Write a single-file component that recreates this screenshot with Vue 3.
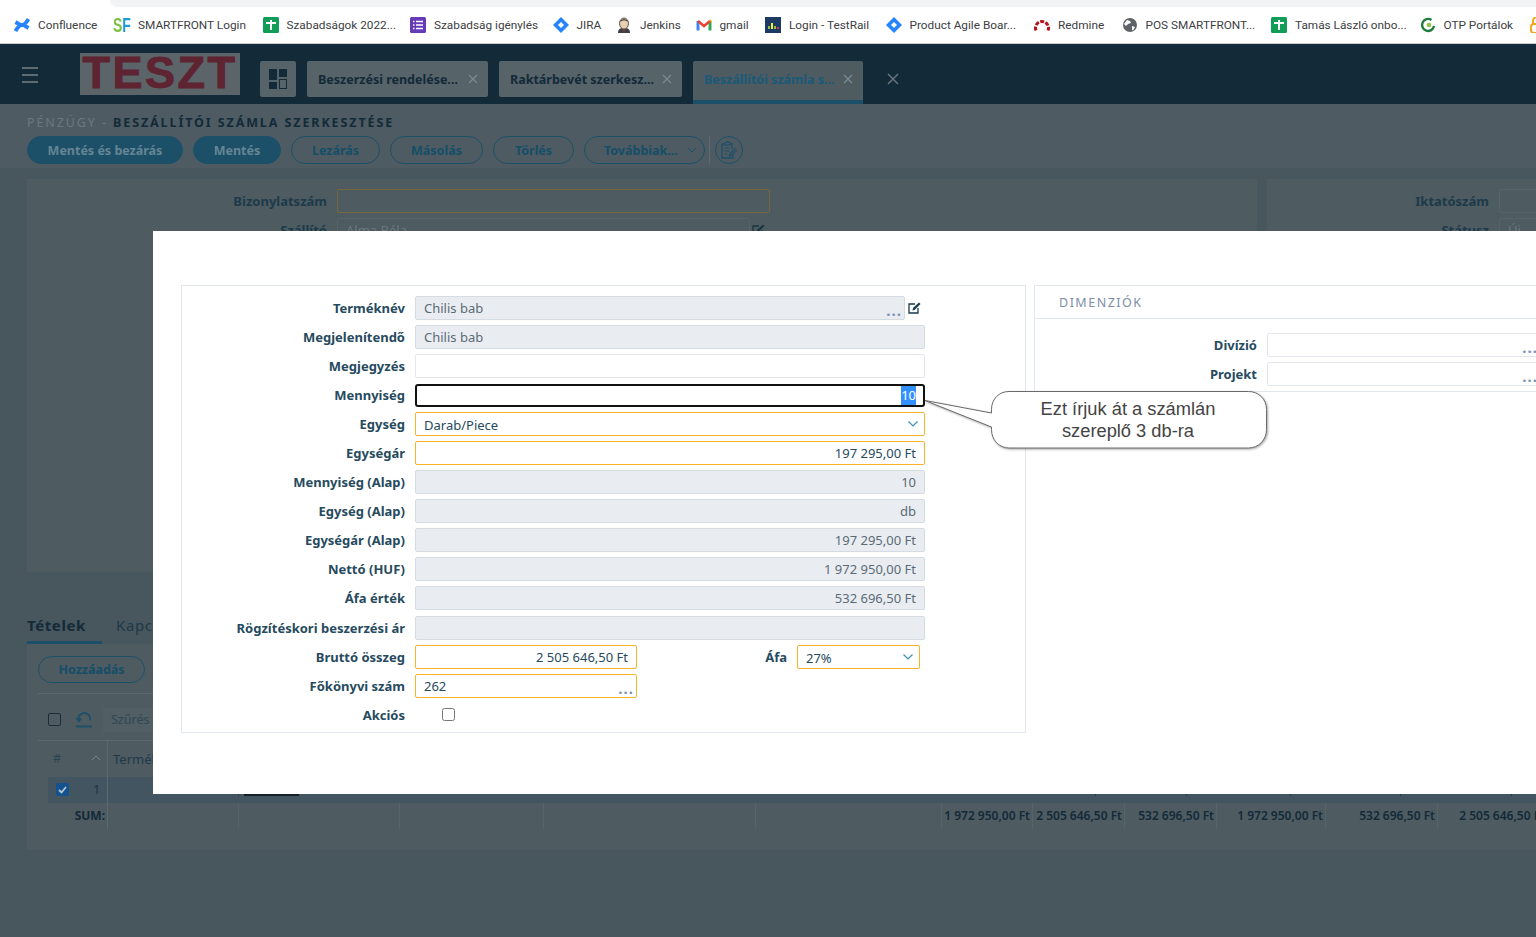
<script setup>
const bookmarks = [
  { icon: 'confluence', label: 'Confluence', width: 58.5 },
  { icon: 'sf', label: 'SMARTFRONT Login', width: 108 },
  { icon: 'sheet', label: 'Szabadságok 2022...', width: 107 },
  { icon: 'forms', label: 'Szabadság igénylés', width: 102 },
  { icon: 'jira', label: 'JIRA', width: 23 },
  { icon: 'jenkins', label: 'Jenkins', width: 39 },
  { icon: 'gmail', label: 'gmail', width: 29 },
  { icon: 'testrail', label: 'Login - TestRail', width: 80 },
  { icon: 'jira', label: 'Product Agile Boar...', width: 108 },
  { icon: 'redmine', label: 'Redmine', width: 47 },
  { icon: 'globe', label: 'POS SMARTFRONT...', width: 109 },
  { icon: 'sheet', label: 'Tamás László onbo...', width: 108 },
  { icon: 'otp', label: 'OTP Portálok', width: 69 },
  { icon: 'last', label: '', width: 0 }
]

const tabs = [
  { label: 'Beszerzési rendelése...', cls: 'tab-a' },
  { label: 'Raktárbevét szerkesz...', cls: 'tab-b' },
  { label: 'Beszállítói számla s...', cls: 'tab-c active' }
]

const disabledRows = [
  { label: 'Mennyiség (Alap)', value: '10' },
  { label: 'Egység (Alap)', value: 'db' },
  { label: 'Egységár (Alap)', value: '197 295,00 Ft' },
  { label: 'Nettó (HUF)', value: '1 972 950,00 Ft' },
  { label: 'Áfa érték', value: '532 696,50 Ft' }
]

const sums = [
  '', '', '', '', '',
  '1 972 950,00 Ft', '2 505 646,50 Ft', '532 696,50 Ft',
  '1 972 950,00 Ft', '532 696,50 Ft', '2 505 646,50 Ft'
]
</script>

<template>
  <div class="screen">
    <div class="omni-wrap"><div class="omni"></div></div>

    <div class="bookmarks">
      <div v-for="(b, i) in bookmarks" :key="i" class="bookmark">
        <svg v-if="b.icon === 'confluence'" class="bm-icon" viewBox="0 0 16 16">
          <path d="M1.500 14C5 8 7.500 7 10.500 8.600L14.500 11" fill="none" stroke="#2684ff" stroke-width="3.800" />
          <path d="M14.500 2C11 8 8.500 9 5.500 7.400L1.500 5" fill="none" stroke="#2684ff" stroke-width="3.800" />
        </svg>
        <span v-else-if="b.icon === 'sf'" class="bm-icon sf"><i class="s">S</i><i class="f">F</i></span>
        <svg v-else-if="b.icon === 'sheet'" class="bm-icon" viewBox="0 0 16 16">
          <rect width="16" height="16" rx="1.500" fill="#0f9d58" />
          <path d="M3 6h10M8 3v10" stroke="#fff" stroke-width="2" />
        </svg>
        <svg v-else-if="b.icon === 'forms'" class="bm-icon" viewBox="0 0 16 16">
          <rect width="16" height="16" rx="1.500" fill="#673ab7" />
          <path d="M6 4.500h7M6 8h7M6 11.500h7M3 4.500h1.500M3 8h1.500M3 11.500h1.500" stroke="#fff" stroke-width="1.500" />
        </svg>
        <svg v-else-if="b.icon === 'jira'" class="bm-icon" viewBox="0 0 16 16">
          <path d="M8 0l8 8-8 8-8-8z" fill="#2684ff" />
          <path d="M8 5l3 3-3 3-3-3z" fill="#fff" />
        </svg>
        <svg v-else-if="b.icon === 'jenkins'" class="bm-icon" viewBox="0 0 16 16">
          <path d="M2 16c0-4 2-5 6-5s6 1 6 5z" fill="#3f3f46" />
          <path d="M6.500 12l1.500 2 1.500-2z" fill="#c9342c" />
          <ellipse cx="8" cy="6.500" rx="4.500" ry="5.500" fill="#eacfb2" stroke="#57504a" />
          <path d="M4 5c1-4 7-4 8 0-3-2-5-2-8 0z" fill="#57504a" />
        </svg>
        <svg v-else-if="b.icon === 'gmail'" class="bm-icon" viewBox="0 0 16 16">
          <path d="M2 13.500V4" stroke="#4285f4" stroke-width="3" />
          <path d="M14 13.500V4" stroke="#34a853" stroke-width="3" />
          <path d="M2 4l6 5 6-5" fill="none" stroke="#ea4335" stroke-width="2.600" />
          <path d="M13 2.500l2.500.5v3z" fill="#fbbc04" />
        </svg>
        <svg v-else-if="b.icon === 'testrail'" class="bm-icon" viewBox="0 0 16 16">
          <rect width="16" height="16" fill="#1c3a63" />
          <path d="M3 9h2v3H3z" fill="#8bc34a" />
          <path d="M6 6h2v6H6z" fill="#ffeb3b" />
          <path d="M9 9h2v3H9z" fill="#8bc34a" />
          <path d="M12 10h2v2h-2z" fill="#e53935" />
        </svg>
        <svg v-else-if="b.icon === 'redmine'" class="bm-icon" viewBox="0 0 16 16">
          <path d="M2 13.500A6.500 6.500 0 1 1 14 13.500" fill="none" stroke="#b5121b" stroke-width="3" stroke-dasharray="4 1.400" />
        </svg>
        <svg v-else-if="b.icon === 'globe'" class="bm-icon" viewBox="0 0 16 16">
          <circle cx="8" cy="8" r="7" fill="#5f6368" />
          <path d="M5 3l3 1 1 2-3 1-2 2-2-2zM10 9l3 1-2 3.500-1-1z" fill="#fff" />
        </svg>
        <svg v-else-if="b.icon === 'otp'" class="bm-icon" viewBox="0 0 16 16">
          <path d="M11.500 3A6 6 0 1 0 14 9" fill="none" stroke="#1f7a3d" stroke-width="2.400" />
          <circle cx="9" cy="8" r="2.300" fill="#8cc63f" />
        </svg>
        <svg v-else class="bm-icon" viewBox="0 0 16 16">
          <path d="M4 7V4a4 4 0 0 1 8 0v3" fill="none" stroke="#f5a623" stroke-width="2" />
          <rect x="2" y="7" width="12" height="9" rx="3" fill="none" stroke="#f5a623" stroke-width="2" />
        </svg>
        <span v-if="b.label" class="bm-label" :style="{ width: b.width + 'px' }">{{ b.label }}</span>
      </div>
    </div>

    <header class="app-header">
      <div class="hamburger"><span></span><span></span><span></span></div>
      <div class="logo">TESZT</div>
      <div class="layout-btn">
        <svg width="18" height="20" viewBox="0 0 18 20">
          <path d="M0 0h8v11H0zM10 0h8v8h-8zM0 13h8v7H0z" fill="#132a38" />
          <rect x="10.500" y="10.500" width="7" height="9" fill="none" stroke="#132a38" />
        </svg>
      </div>
      <div v-for="t in tabs" :key="t.label" class="tab" :class="t.cls">
        <span class="tab-text">{{ t.label }}</span>
        <svg class="tab-x" width="10" height="10" viewBox="0 0 10 10">
          <path d="M1 1l8 8M9 1L1 9" stroke="#7b8a92" stroke-width="1.200" />
        </svg>
      </div>
      <svg class="close-all" width="12" height="12" viewBox="0 0 12 12">
        <path d="M1 1l10 10M11 1L1 11" stroke="#66757d" stroke-width="1.500" />
      </svg>
    </header>

    <div class="title-zone">
      <div class="page-title"><span class="crumb">PÉNZÜGY -</span> <b>BESZÁLLÍTÓI SZÁMLA SZERKESZTÉSE</b></div>
      <div class="toolbar">
        <button class="btn solid w156">Mentés és bezárás</button>
        <button class="btn solid w88">Mentés</button>
        <button class="btn w89">Lezárás</button>
        <button class="btn w93">Másolás</button>
        <button class="btn w81">Törlés</button>
        <button class="btn w121">
          Továbbiak...
          <svg width="10" height="6" viewBox="0 0 10 6"><path d="M1 1l4 4 4-4" fill="none" stroke="#1c5069" /></svg>
        </button>
        <div class="tool-sep"></div>
        <div class="tool-round">
          <svg width="16" height="18" viewBox="0 0 16 18">
            <path d="M3 3H1v14h11v-3M11 8V3H9" fill="none" stroke="#1c5069" stroke-width="1.300" />
            <path d="M4 1.500h1.500a1 1 0 0 1 2 0H9V4H4zM3.500 7h5M3.500 10h5M3.500 13h3M14.500 7L9 13l-.5 2 2-.5L16 9" fill="none" stroke="#1c5069" stroke-width="1.200" />
          </svg>
        </div>
      </div>
    </div>

    <div class="content">
      <div class="top-panels">
        <div class="bg-panel main-panel">
          <div class="bg-row">
            <label class="bg-label">Bizonylatszám</label>
            <div class="bg-input amber"></div>
          </div>
          <div class="bg-row">
            <label class="bg-label">Szállító</label>
            <div class="bg-input short">Alma Béla</div>
            <svg class="bg-edit" width="13" height="12" viewBox="0 0 13 12">
              <path d="M7 2H1v9h9V6" fill="none" stroke="#1c3442" stroke-width="1.300" />
              <path d="M4.500 8.500l.5-2.500 6-5.500 1.500 1.500-6 6z" fill="#1c3442" />
            </svg>
          </div>
        </div>
        <div class="bg-panel side-panel">
          <div class="bg-row">
            <label class="bg-label side">Iktatószám</label>
            <div class="bg-input grow"></div>
          </div>
          <div class="bg-row">
            <label class="bg-label side">Státusz</label>
            <div class="bg-input grow">Új</div>
          </div>
        </div>
      </div>

      <div class="lower-tabs">
        <div class="lower-tab on">Tételek</div>
        <div class="lower-tab">Kapcsolódó</div>
      </div>

      <div class="bg-panel lower-panel">
        <div class="add-row"><button class="btn add">Hozzáadás</button></div>
        <div class="filter-row">
          <span class="dim-check"></span>
          <svg class="refresh" width="18" height="17" viewBox="0 0 18 17">
            <path d="M4 11A6 6 0 1 1 15 9.500M1 15.500h16" fill="none" stroke="#1c5069" stroke-width="1.800" />
            <path d="M0 7l4.500 4.500L7 7z" fill="#1c5069" />
          </svg>
          <div class="filter-box">Szűrés</div>
        </div>
        <div class="grid-head">
          <div class="hash">#<span class="sort">
            <svg width="10" height="6" viewBox="0 0 10 6"><path d="M1 5l4-4 4 4" fill="none" stroke="#75858d" /></svg>
          </span></div>
          <div class="col-title">Terméknév</div>
        </div>
        <div class="grid-row">
          <div class="cell-first">
            <span class="blue-check">
              <svg width="9" height="8" viewBox="0 0 9 8"><path d="M1 4l2.500 2.500L8 1" fill="none" stroke="#b9c6cf" stroke-width="1.800" /></svg>
            </span>
            <span class="row-no">1</span>
          </div>
          <div class="tick"></div>
          <div class="tick bar"></div>
          <div class="tick"></div>
          <div class="tick"></div>
          <div class="tick"></div>
          <div class="tick"></div>
        </div>
        <div class="sum-row">
          <div class="sum-title">SUM:</div>
          <div v-for="(s, i) in sums" :key="i" class="sum-cell">{{ s }}</div>
        </div>
      </div>
    </div>

    <section class="modal">
      <div class="form-panel">
        <div class="row">
          <label>Terméknév</label>
          <div class="field disabled short-field">Chilis bab<span class="dots">...</span></div>
          <svg class="edit" width="13" height="12" viewBox="0 0 13 12">
            <path d="M7 2H1v9h9V6" fill="none" stroke="#163a4e" stroke-width="1.300" />
            <path d="M4.500 8.500l.5-2.500 6-5.500 1.500 1.500-6 6z" fill="#163a4e" />
          </svg>
        </div>
        <div class="row"><label>Megjelenítendő</label><div class="field disabled">Chilis bab</div></div>
        <div class="row"><label>Megjegyzés</label><div class="field"></div></div>
        <div class="row">
          <label>Mennyiség</label>
          <div class="field focused"><span class="selected">10</span></div>
        </div>
        <div class="row">
          <label>Egység</label>
          <div class="field required dark select">
            Darab/Piece
            <svg class="chev" width="10" height="6" viewBox="0 0 10 6"><path d="M.5.500L5 5 9.500.500" fill="none" stroke="#3a8fc0" stroke-width="1.200" /></svg>
          </div>
        </div>
        <div class="row"><label>Egységár</label><div class="field required right dark">197 295,00 Ft</div></div>
        <div v-for="r in disabledRows" :key="r.label" class="row">
          <label>{{ r.label }}</label>
          <div class="field disabled right">{{ r.value }}</div>
        </div>
        <div class="row extra-top"><label>Rögzítéskori beszerzési ár</label><div class="field disabled"></div></div>
        <div class="row">
          <label>Bruttó összeg</label>
          <div class="field required right dark half">2 505 646,50 Ft</div>
          <label class="afa-label">Áfa</label>
          <div class="field required dark afa select">
            27%
            <svg class="chev" width="10" height="6" viewBox="0 0 10 6"><path d="M.5.500L5 5 9.500.500" fill="none" stroke="#3a8fc0" stroke-width="1.200" /></svg>
          </div>
        </div>
        <div class="row">
          <label>Főkönyvi szám</label>
          <div class="field required dark half">262<span class="dots">...</span></div>
        </div>
        <div class="row">
          <label>Akciós</label>
          <input class="check" type="checkbox" />
        </div>
      </div>

      <div class="dim-panel">
        <div class="dim-head">DIMENZIÓK</div>
        <div class="dim-body">
          <div class="row"><label class="dim-label">Divízió</label><div class="field dim-field"><span class="dots">...</span></div></div>
          <div class="row"><label class="dim-label">Projekt</label><div class="field dim-field"><span class="dots">...</span></div></div>
        </div>
      </div>
    </section>

    <div class="callout">
      <svg class="callout-shape" width="350" height="62" viewBox="0 0 350 62">
        <path d="M70.500 18.500C70.500 8 78 .5 88 .5H327.500c10 0 18 7.500 18 18v20c0 10.500-8 18.500-18 18.500H88c-10 0-17.500-8-17.500-18.500V36L4 9.500 70.500 22z" fill="#fff" stroke="#6a6a6a" />
      </svg>
      <div class="callout-text">Ezt írjuk át a számlán<br />szereplő 3 db-ra</div>
    </div>
  </div>
</template>

<style>
html, body {
  margin: 0;
  overflow: hidden;
}
</style>

<style scoped>
.screen {
  position: relative;
  width: 1536px;
  height: 937px;
  overflow: hidden;
  background: #48565d;
  font-family: "Noto Sans", sans-serif;
  color: #132a38;
}

.omni-wrap {
  height: 7px;
  background: #fff;
  padding-left: 110px;
}

.omni {
  height: 7px;
  background: #f1f3f4;
  border-bottom-left-radius: 8px;
}

.bookmarks {
  display: flex;
  align-items: center;
  gap: 16.500px;
  height: 36px;
  padding-left: 14px;
  background: #fff;
  border-bottom: 1px solid #c9ccd0;
  white-space: nowrap;
}

.bookmark {
  display: flex;
  align-items: center;
  gap: 8px;
  flex: none;
  font-family: Roboto, sans-serif;
  font-size: 11.800px;
  color: #3c4043;
}

.bm-label {
  flex: none;
}

.bm-icon {
  width: 16px;
  height: 16px;
  flex: none;
}

.sf {
  display: flex;
  width: 17px;
  font-family: "Liberation Sans", sans-serif;
  font-size: 14px;
  font-weight: 700;
  line-height: 16px;
  transform: scaleY(1.400);
}

.sf i {
  font-style: normal;
}

.s {
  color: #7cc142;
}

.f {
  color: #1e9bd7;
}

.app-header {
  display: flex;
  align-items: flex-start;
  height: 60px;
  background: #132a38;
}

.hamburger {
  display: flex;
  flex-direction: column;
  gap: 5px;
  width: 16px;
  margin: 23px 42px 0 22px;
}

.hamburger span {
  height: 2px;
  background: #5d6b72;
}

.logo {
  width: 160px;
  height: 42px;
  margin-top: 9px;
  margin-right: 20px;
  background: #5a6469;
  color: #5f2431;
  font-family: "Liberation Sans", sans-serif;
  font-size: 45px;
  font-weight: 700;
  letter-spacing: 2.500px;
  line-height: 40px;
  text-align: center;
  -webkit-text-stroke: 1px #5f2431;
}

.layout-btn {
  display: flex;
  align-items: center;
  justify-content: center;
  width: 36px;
  height: 36px;
  margin-top: 17px;
  margin-right: 11px;
  border-radius: 2px;
  background: #566369;
}

.tab {
  display: flex;
  align-items: center;
  justify-content: space-between;
  box-sizing: border-box;
  height: 36px;
  margin-top: 17px;
  margin-right: 11px;
  padding: 0 10px 0 11px;
  border-radius: 2px;
  background: #566369;
  font-size: 12.500px;
  font-weight: 700;
  white-space: nowrap;
}

.tab-a {
  width: 181px;
}

.tab-b {
  width: 183px;
}

.tab-c {
  width: 170px;
  height: 43px;
  padding-bottom: 3px;
  border-bottom: 4px solid #1c5069;
  border-radius: 2px 2px 0 0;
  background: #4e5b61;
  color: #1a5a78;
}

.close-all {
  margin: 29px 0 0 13px;
}

.title-zone {
  box-sizing: border-box;
  height: 64px;
  padding: 12px 0 0 27px;
  background: #4e5b62;
}

.page-title {
  font-size: 12.500px;
  line-height: 14px;
  letter-spacing: 1.900px;
  white-space: nowrap;
}

.crumb {
  color: #6a7980;
}

.toolbar {
  display: flex;
  align-items: center;
  gap: 10px;
  margin-top: 6px;
}

.btn {
  box-sizing: border-box;
  height: 28px;
  padding: 0;
  border: 1px solid #1c5069;
  border-radius: 14px;
  background: transparent;
  color: #154e68;
  font-family: "Noto Sans", sans-serif;
  font-size: 12.500px;
  font-weight: 700;
  white-space: nowrap;
}

.btn svg {
  margin-left: 6px;
  vertical-align: 2px;
}

.solid {
  background: #1c5069;
  color: #668592;
}

.w156 {
  width: 156px;
}

.w88 {
  width: 88px;
}

.w89 {
  width: 89px;
}

.w93 {
  width: 93px;
}

.w81 {
  width: 81px;
}

.w121 {
  width: 121px;
  padding-left: 12px;
}

.tool-sep {
  width: 1px;
  height: 28px;
  margin: 0 -5px 0 -6px;
  background: #5c6b72;
}

.tool-round {
  display: flex;
  align-items: center;
  justify-content: center;
  box-sizing: border-box;
  width: 28px;
  height: 28px;
  border: 1px solid #1c5069;
  border-radius: 50%;
}

.content {
  padding: 11px 0 0 27px;
}

.top-panels {
  display: flex;
  gap: 10px;
  height: 393px;
}

.bg-panel {
  background: #4e5b61;
}

.main-panel {
  flex: none;
  width: 1230px;
}

.side-panel {
  flex: 1;
}

.bg-row {
  display: flex;
  align-items: center;
  gap: 10px;
  height: 24px;
  margin-bottom: 5px;
}

.main-panel .bg-row:first-child,
.side-panel .bg-row:first-child {
  margin-top: 10px;
}

.bg-label {
  flex: none;
  width: 300px;
  color: #1d3a4a;
  font-size: 13px;
  font-weight: 700;
  text-align: right;
}

.bg-label.side {
  width: 222px;
}

.bg-input {
  box-sizing: border-box;
  width: 433px;
  height: 24px;
  padding-left: 8px;
  border: 1px solid #566369;
  border-radius: 2px;
  color: #6a7980;
  font-size: 13px;
  line-height: 22px;
}

.bg-input.amber {
  border-color: #75683f;
}

.bg-input.short {
  width: 413px;
}

.bg-input.grow {
  flex: 1;
}

.bg-edit {
  margin-left: -8px;
}

.lower-tabs {
  display: flex;
  gap: 14px;
  height: 39px;
  margin-top: 33px;
  margin-bottom: 0;
}

.lower-tab {
  box-sizing: border-box;
  height: 39px;
  padding-top: 10px;
  font-size: 15px;
  line-height: 20px;
  letter-spacing: .6px;
  color: #1d3a4a;
}

.lower-tab.on {
  width: 75px;
  border-bottom: 3px solid #1c5069;
  font-weight: 700;
  color: #132a38;
}

.lower-panel {
  height: 206px;
  padding-left: 11px;
}

.add-row {
  height: 37px;
  padding-top: 12px;
  border-bottom: 1px solid #5a686f;
}

.btn.add {
  width: 107px;
  height: 27px;
  color: #154e68;
  font-size: 12.500px;
}

.filter-row {
  display: flex;
  align-items: center;
  box-sizing: border-box;
  height: 47px;
  padding: 5px 0 0 10px;
  border-bottom: 1px solid #5a686f;
}

.dim-check {
  box-sizing: border-box;
  width: 13px;
  height: 13px;
  border: 1px solid #1a2e3a;
  border-radius: 2px;
}

.refresh {
  margin-left: 14px;
}

.filter-box {
  flex: none;
  width: 60px;
  height: 24px;
  margin-left: 10px;
  padding-left: 8px;
  background: #515e64;
  color: #2f4855;
  font-size: 12.500px;
  line-height: 24px;
}

.grid-head {
  display: flex;
  height: 36px;
  margin-left: 10px;
  color: #1d3a4a;
}

.hash {
  position: relative;
  box-sizing: border-box;
  width: 60px;
  padding: 9px 0 0 5px;
  border-right: 1px solid #5a686f;
  font-size: 12.500px;
  color: #2a4452;
}

.sort {
  position: absolute;
  top: 7px;
  right: 6px;
}

.col-title {
  padding: 9px 0 0 5px;
  font-size: 13px;
}

.grid-row {
  display: grid;
  grid-template-columns: 60px 131px 857px 91px 104px 110px 111px 1fr;
  height: 26px;
  margin-left: 10px;
  background: #435561;
}

.cell-first {
  position: relative;
  height: 26px;
  border-right: 1px solid #5a686f;
}

.blue-check {
  position: absolute;
  top: 6px;
  left: 8px;
  display: flex;
  align-items: center;
  justify-content: center;
  width: 13px;
  height: 13px;
  border-radius: 2px;
  background: #14518f;
}

.row-no {
  position: absolute;
  top: 4px;
  right: 7px;
  font-size: 12px;
  color: #1a3442;
}

.tick {
  height: 19px;
  border-right: 1px solid #2c3c46;
}

.tick.bar {
  position: relative;
}

.tick.bar::before {
  content: "";
  position: absolute;
  top: 17px;
  left: 5px;
  width: 55px;
  height: 2px;
  background: #152028;
}

.sum-row {
  display: grid;
  grid-template-columns: 60px 131px 161px 144px 212px 186px 91px 92px 92px 109px 112px 110px;
  height: 26px;
  margin-left: 10px;
}

.sum-title {
  height: 26px;
  padding-right: 2px;
  border-right: 1px solid #5a686f;
  font-size: 12px;
  font-weight: 700;
  line-height: 25px;
  text-align: right;
  box-sizing: border-box;
  color: #132a38;
}

.sum-cell {
  box-sizing: border-box;
  height: 26px;
  padding-right: 2px;
  border-right: 1px solid #566369;
  font-size: 12px;
  font-weight: 600;
  line-height: 25px;
  text-align: right;
  white-space: nowrap;
  color: #132a38;
}

/* modal */
.modal {
  position: absolute;
  top: 231px;
  left: 153px;
  right: 0;
  display: flex;
  gap: 8px;
  box-sizing: border-box;
  height: 563px;
  padding: 54px 0 0 28px;
  background: #fff;
  overflow: hidden;
}

.form-panel {
  flex: none;
  box-sizing: border-box;
  width: 845px;
  height: 448px;
  padding-top: 10px;
  border: 1px solid #e3e8ef;
}

.row {
  display: flex;
  align-items: center;
  height: 24px;
  margin-bottom: 5px;
}

.row.extra-top {
  margin-top: 6px;
}

.row label {
  flex: none;
  box-sizing: border-box;
  width: 223px;
  color: #264a5e;
  font-size: 13px;
  font-weight: 700;
  text-align: right;
  white-space: nowrap;
}

.row .field {
  margin-left: 10px;
}

.field {
  position: relative;
  box-sizing: border-box;
  flex: none;
  width: 510px;
  height: 24px;
  padding: 0 8px;
  border: 1px solid #e4e8ee;
  border-radius: 2px;
  background: #fff;
  font-size: 13px;
  line-height: 22px;
  color: #5b6b75;
}

.disabled {
  border-color: #d5dbe3;
  background: #e9edf1;
}

.short-field {
  width: 490px;
}

.required {
  border-color: #fbb32b;
}

.dark {
  color: #264a5e;
}

.right {
  text-align: right;
}

.half {
  width: 222px;
}

.select {
  line-height: 24px;
}

.focused {
  height: 23px;
  border: 2px solid #111;
  border-radius: 3px;
  padding-right: 7px;
  text-align: right;
  line-height: 19px;
}

.selected {
  display: inline-block;
  height: 19px;
  background: #3390ff;
  color: #fff;
}

.chev {
  position: absolute;
  top: 8px;
  right: 6px;
}

.dots {
  position: absolute;
  right: 2px;
  bottom: 4px;
  color: #7d93b5;
  font-size: 15px;
  font-weight: 700;
  line-height: 9px;
  letter-spacing: 1px;
}

.edit {
  margin-left: 3px;
}

.row label.afa-label {
  width: 150px;
}

.row .afa {
  width: 123px;
}

.check {
  margin: 0 0 2px 37px;
  width: 13px;
  height: 13px;
}

.dim-panel {
  flex: none;
  box-sizing: border-box;
  width: 600px;
  height: 107px;
  border: 1px solid #e3e8ef;
}

.dim-head {
  box-sizing: border-box;
  height: 33px;
  padding-left: 24px;
  border-bottom: 1px solid #e3e8ef;
  color: #7d8ea5;
  font-size: 12.500px;
  letter-spacing: 1.500px;
  line-height: 34px;
}

.dim-body {
  padding-top: 14px;
}

.row label.dim-label {
  width: 222px;
}

.row .dim-field {
  width: 320px;
}

.row .dim-field .dots {
  right: 48px;
}

/* callout bubble, sits on top of the modal */
.callout {
  position: absolute;
  top: 391px;
  left: 921px;
  width: 350px;
  height: 62px;
}

.callout-shape {
  display: block;
  filter: drop-shadow(1px 1px 1px rgba(0, 0, 0, .35));
}

.callout-text {
  position: absolute;
  top: 7px;
  left: 70px;
  width: 274px;
  color: #444;
  font-family: "Liberation Sans", sans-serif;
  font-size: 18.300px;
  line-height: 21.500px;
  text-align: center;
}
</style>
